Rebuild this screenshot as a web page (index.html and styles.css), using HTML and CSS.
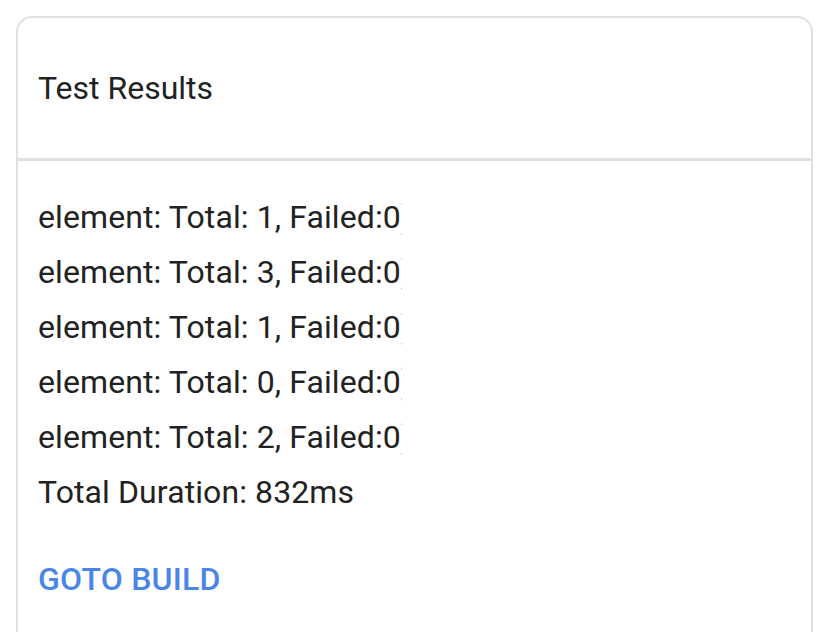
FILE: index.html
```html
<!DOCTYPE html>
<html>
<head>
<meta charset="utf-8">
<link rel="stylesheet" href="styles.css">
</head>
<body>
<div class="card">
  <div class="card-header">Test Results</div>
  <div class="card-content">
    <div class="line clip">element: Total: 1, Failed:0)</div>
    <div class="line clip">element: Total: 3, Failed:0)</div>
    <div class="line clip">element: Total: 1, Failed:0)</div>
    <div class="line clip">element: Total: 0, Failed:0)</div>
    <div class="line clip">element: Total: 2, Failed:0)</div>
    <div class="line">Total Duration: 832ms</div>
    <div class="actions"><a class="btn">GOTO BUILD</a></div>
  </div>
</div>
</body>
</html>
```
FILE: styles.css
```css
html, body {
  margin: 0;
  padding: 0;
  background: #fff;
}
body {
  padding: 16px 13px 0 16px;
  font-family: Roboto, "Noto Sans", sans-serif;
  color: #222;
  height: 632px;
  box-sizing: border-box;
  overflow: hidden;
}
.card {
  border: 2px solid #e0e0e0;
  border-radius: 16px;
  height: 700px;
}
.card-header {
  height: 140px;
  display: flex;
  align-items: center;
  padding-left: 20px;
  font-size: 32px;
  border-bottom: 3px solid #e0e0e0;
}
.card-content {
  padding: 29px 20px 0 20px;
}
.line {
  font-size: 32px;
  line-height: 55px;
  letter-spacing: 0.1px;
  white-space: nowrap;
}
.clip {
  width: 364px;
  overflow: hidden;
}
.actions {
  padding-top: 39px;
}
.btn {
  color: #4a86e8;
  font-weight: 500;
  font-size: 32px;
  line-height: 40px;
  letter-spacing: 0.2px;
}
```
